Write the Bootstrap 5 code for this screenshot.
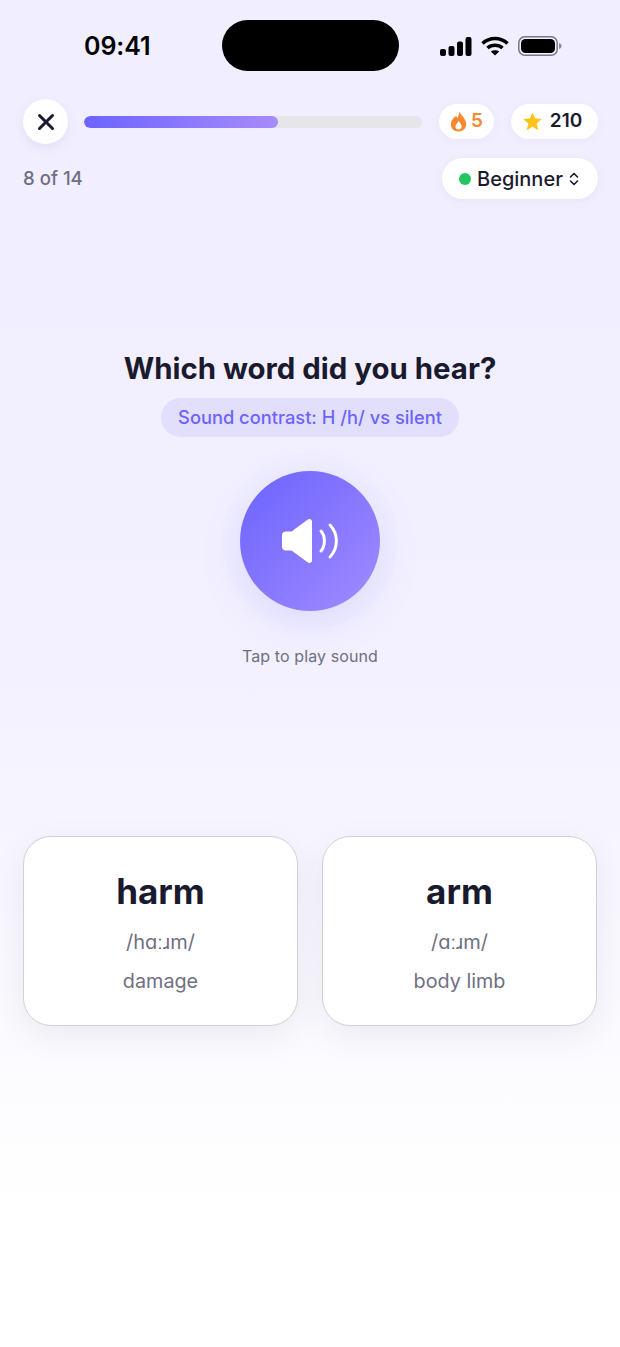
<!doctype html>
<html lang="en"><head><meta charset="utf-8"><title>Listening</title>
<link href="https://cdn.jsdelivr.net/npm/bootstrap@5.3.0/dist/css/bootstrap.min.css" rel="stylesheet">
<style>
html,body{height:100%}
body{font-family:Inter,"Liberation Sans",sans-serif;color:#1a1a2e;background:#fff}
.screen{height:1347px;width:620px;overflow:hidden;background:linear-gradient(180deg,#f0eeff 0%,#f3f1ff 50%,#ffffff 90%)}
.statusbar{height:71px;margin-top:20px;padding:0 57px 0 84px}
.clock{font-size:25px;font-weight:600;color:#000;width:138px;line-height:51px;padding-top:1px;letter-spacing:-.1px}
.island{width:177px;height:51px;border-radius:26px;background:#000}
.status-icons{margin-left:41px;gap:9px;height:51px}
.toprow{margin-top:8px;padding:0 22px 0 23px;height:45px}
.closebtn{width:45px;height:45px;border:0;background:#fff;padding:0;box-shadow:0 4px 12px rgba(60,50,120,.08)}
.track{width:338px;height:12px;margin-left:16px;border-radius:6px;background:#e5e5ea;overflow:hidden}
.fill{height:12px;border-radius:6px;background:linear-gradient(90deg,#6c63ff,#a78bfa)}
.stat{height:35px;background:#fff;border-radius:18px;font-size:19px;font-weight:600;box-shadow:0 2px 8px rgba(60,50,120,.05)}
.stat-fire{width:55px;margin-left:17px;color:#f7882f}
.stat-star{width:87px;margin-left:17px;padding-right:4px}
.subrow{padding:14px 22px 0 23px}
.counter{font-size:18.600px;font-weight:500;color:#6f6f82}
.levelpill{width:156px;height:41px;background:#fff;border-radius:21px;font-size:20px;font-weight:500;box-shadow:0 2px 10px rgba(60,50,120,.07);padding-left:17px}
.dot{width:12px;height:12px;border-radius:50%;background:#22c55e;margin-right:6px}
.caret{margin-left:5px}
.question{margin:150px 0 0;font-size:29.400px;line-height:40px;font-weight:700;text-align:center;color:#1a1a2e}
.contrast{height:39px;width:298px;margin:9px auto 0;border-radius:20px;background:#e2dffc;color:#6c63ff;font-size:18.300px;font-weight:500;padding-top:1px}
.playbtn{width:140px;height:140px;margin:34px auto 0;border:0;padding:0;background:linear-gradient(135deg,#6c63ff,#a08bff);box-shadow:0 12px 40px rgba(108,99,255,.15),0 0 0 18px rgba(108,99,255,.01)}
.hint{margin-top:34px;font-size:16px;line-height:22px;letter-spacing:.1px;text-align:center;color:#6f6f82}
.choices{margin-top:169px;padding:0 23px;gap:24px}
.choice{flex:1 1 0;height:190px;background:#fff;border:1px solid #d0d0d6;border-radius:28px;box-shadow:0 10px 32px rgba(50,50,90,.08);text-align:center;padding-top:32px}
.word{font-size:35px;line-height:44px;font-weight:700;color:#1a1a2e}
.ipa{margin-top:15px;font-size:20px;line-height:28px;color:#6f6f82}
.meaning{margin-top:11px;font-size:19.800px;line-height:28px;color:#6f6f82}
</style></head>
<body>
<main class="screen">
  <div class="statusbar d-flex align-items-start">
    <div class="clock">09:41</div>
    <div class="island flex-shrink-0"></div>
    <div class="status-icons d-flex align-items-center">
      <svg width="32" height="20" viewBox="0 0 32 20"><rect x="0" y="13" width="6" height="7" rx="2" fill="#000"/><rect x="8.500" y="10" width="6" height="10" rx="2" fill="#000"/><rect x="17" y="5.500" width="6" height="14.500" rx="2" fill="#000"/><rect x="25.500" y="1" width="6" height="19" rx="2" fill="#000"/></svg>
      <svg width="28" height="20" viewBox="0 0 28 20" fill="none" stroke="#000" stroke-width="3.600"><path d="M1.500 7.500C8.500 .8 19.500 .8 26.500 7.500"/><path d="M6.500 12C10.500 8.300 17.500 8.300 21.500 12"/><path d="M14 19.500 9.800 15.500C12 13.700 16 13.700 18.200 15.500Z" fill="#000" stroke="none"/></svg>
      <svg width="44" height="20" viewBox="0 0 44 20"><rect x=".8" y=".8" width="38.400" height="18.400" rx="6" fill="none" stroke="#77777f" stroke-width="1.500"/><rect x="3" y="3" width="34" height="14" rx="4.500" fill="#000"/><path d="M41 7c1.500.3 2.500 1.500 2.500 3s-1 2.700-2.500 3z" fill="#8a8a92"/></svg>
    </div>
  </div>

  <div class="toprow d-flex align-items-center">
    <button class="closebtn rounded-circle d-flex align-items-center justify-content-center flex-shrink-0" aria-label="Close">
      <svg width="18" height="18" viewBox="0 0 18 18"><path d="M2.500 2.500 15.500 15.500M15.500 2.500 2.500 15.500" stroke="#1a1a2e" stroke-width="3" stroke-linecap="round"/></svg>
    </button>
    <div class="track flex-shrink-0"><div class="fill" style="width:57.400%"></div></div>
    <div class="stat stat-fire d-flex align-items-center justify-content-center gap-1 flex-shrink-0">
      <svg width="17" height="21" viewBox="0 0 17 21"><path fill-rule="evenodd" d="M9 .5c.7 3-1 4.500-1.300 6.500-.9-.5-1.300-1.400-1.400-2.300C3 7 .8 10 .8 13.300.8 17.500 4 20.500 8.500 20.500s7.700-3 7.700-7.200C16.200 8 12 5.500 9 .5ZM8.500 18.500c-1.800 0-3.100-1.300-3.100-3 0-1.900 2.300-3.300 3.200-5.500 1.400 1.700 3 3.400 3 5.500 0 1.700-1.300 3-3.100 3Z" fill="#f7882f"/></svg>
      <span>5</span>
    </div>
    <div class="stat stat-star d-flex align-items-center justify-content-center gap-1 flex-shrink-0">
      <svg class="me-1" width="19" height="19" viewBox="0 0 18 18"><path d="M9 .4 11.500 6.100 17.700 6.700 13 10.900 14.500 17.300 9 14 3.500 17.300 5 10.900 .3 6.700 6.500 6.100Z" fill="#fcc419"/></svg>
      <span>210</span>
    </div>
  </div>

  <div class="subrow d-flex justify-content-between align-items-center">
    <span class="counter">8 of 14</span>
    <div class="levelpill d-flex align-items-center">
      <span class="dot"></span><span>Beginner</span>
      <svg class="caret" width="12" height="16" viewBox="0 0 12 16" fill="none" stroke="#1a1a2e" stroke-width="1.600" stroke-linecap="round" stroke-linejoin="round"><path d="M2.500 6 6 2.500 9.500 6M2.500 10 6 13.500 9.500 10"/></svg>
    </div>
  </div>

  <h1 class="question">Which word did you hear?</h1>
  <div class="contrast d-flex align-items-center justify-content-center">Sound contrast: H /h/ vs silent</div>
  <button class="playbtn rounded-circle d-flex align-items-center justify-content-center" aria-label="Play sound">
    <svg width="58" height="46" viewBox="0 0 58 46" fill="none"><path d="M5 13.500H10.500L26.500 1.800C28.500.4 31 1.200 31 3.800V42.200C31 44.800 28.500 45.600 26.500 44.200L10.500 32.500H5C2.500 32.500 1 31 1 28.500V17.500C1 15 2.500 13.500 5 13.500Z" fill="#fff"/><path d="M40 13C44.500 18 44.500 28 40 33M49 7C57.500 16 57.500 30 49 39" stroke="#fff" stroke-width="3" stroke-linecap="round"/></svg>
  </button>
  <div class="hint">Tap to play sound</div>

  <section class="choices d-flex">
    <article class="choice"><div class="word">harm</div><div class="ipa">/hɑːɹm/</div><div class="meaning">damage</div></article>
    <article class="choice"><div class="word">arm</div><div class="ipa">/ɑːɹm/</div><div class="meaning">body limb</div></article>
  </section>
</main>
<script src="https://cdn.jsdelivr.net/npm/bootstrap@5.3.0/dist/js/bootstrap.bundle.min.js"></script>
</body></html>
